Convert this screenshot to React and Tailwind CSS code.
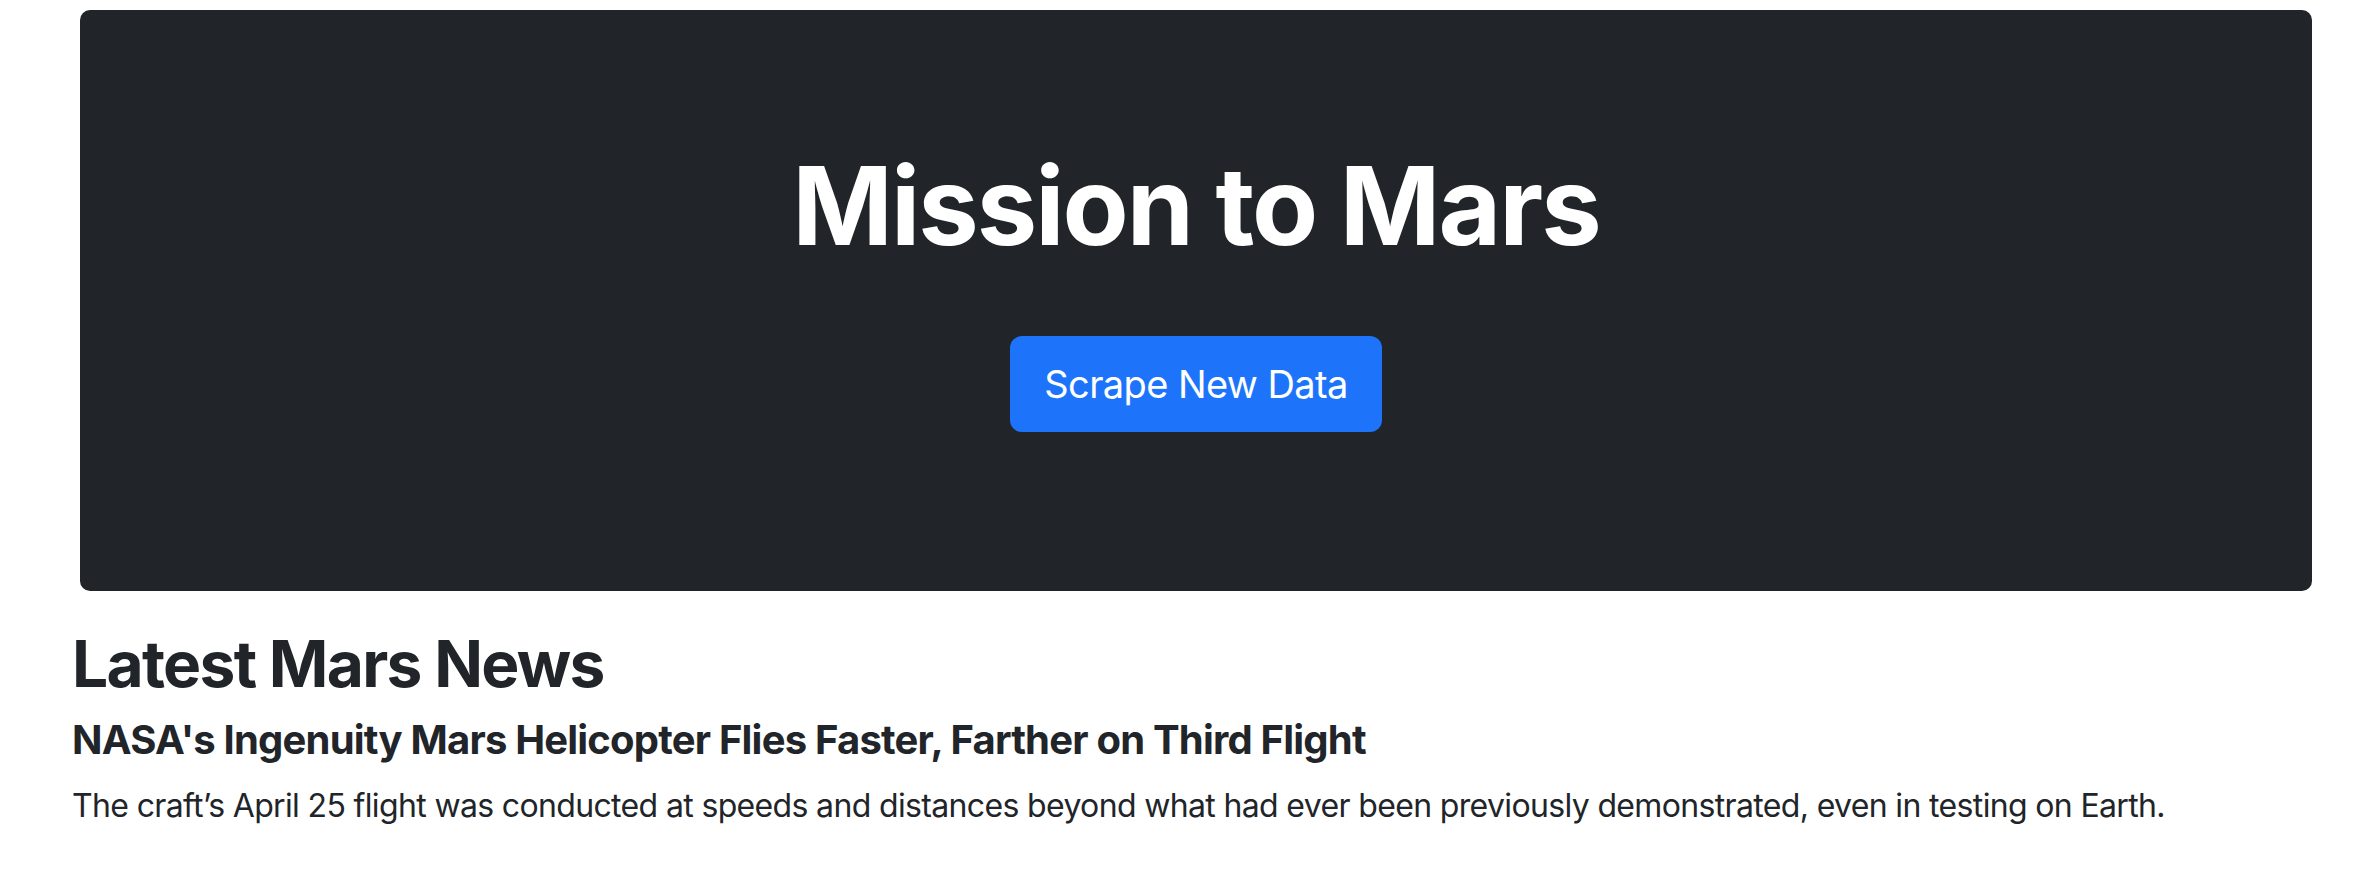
export default function App() {
  return (
    <div className="min-h-screen bg-white font-['Inter','Noto_Sans',sans-serif] text-[#212529]">
      <div className="pt-[10px]">
        <div className="ml-[80px] w-[2232px] h-[581px] rounded-[10px] bg-[#212529] flex flex-col items-center pt-[142px]">
          <h1 className="text-[108px] leading-[108px] font-bold text-white tracking-[-2px]">Mission to Mars</h1>
          <button className="mt-[76px] h-[96px] w-[372px] rounded-[12px] bg-[#1d74fb] text-white text-[38px] leading-none tracking-[-0.6px]">
            Scrape New Data
          </button>
        </div>
      </div>
      <div className="ml-[72px] pt-[41px]">
        <h2 className="text-[64px] leading-[64px] font-bold tracking-[-1.7px]">Latest Mars News</h2>
        <h5 className="mt-[24px] text-[40px] leading-[40px] font-bold tracking-[-0.8px]">
          NASA's Ingenuity Mars Helicopter Flies Faster, Farther on Third Flight
        </h5>
        <p className="mt-[30px] text-[32px] leading-[32px] tracking-[-0.65px]">
          The craft’s April 25 flight was conducted at speeds and distances beyond what had ever been previously demonstrated, even in testing on Earth.
        </p>
      </div>
    </div>
  )
}
